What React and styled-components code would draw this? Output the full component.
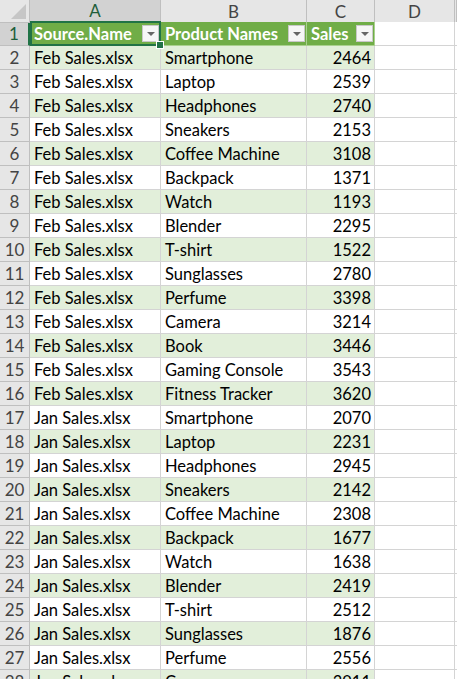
import React from "react";
import styled, { createGlobalStyle } from "styled-components";

const GlobalStyle = createGlobalStyle`
  html, body {
    margin: 0;
    padding: 0;
    background: #ffffff;
    overflow: hidden;
  }
  body {
    font-family: Lato, "Open Sans", sans-serif;
  }
`;

const COLS = "30px 131px 146px 68px 80px 2px";

const Sheet = styled.div`
  width: 457px;
  height: 679px;
  overflow: hidden;
  position: relative;
  font-family: Lato, "Noto Sans", sans-serif;
  font-size: 16.5px;
  color: #000;
`;

const HeaderRow = styled.div`
  display: grid;
  grid-template-columns: ${COLS};
  height: 22px;
`;

const Corner = styled.div`
  background: #e6e6e6;
  border-right: 1px solid #bfbfbf;
  border-bottom: 1px solid #bfbfbf;
  position: relative;
  &::after {
    content: "";
    position: absolute;
    right: 3px;
    bottom: 3px;
    border-left: 15px solid transparent;
    border-bottom: 15px solid #c6c6c6;
  }
`;

const ColHead = styled.div`
  display: flex;
  align-items: center;
  justify-content: center;
  background: ${(p) => (p.$active ? "#d2d2d2" : "#e6e6e6")};
  color: ${(p) => (p.$active ? "#1e5e3a" : "#444")};
  border-right: 1px solid #bfbfbf;
  border-bottom: ${(p) => (p.$active ? "2px solid #217346" : "1px solid #bfbfbf")};
  font-size: 17px;
  box-sizing: border-box;
`;

const Row = styled.div`
  display: grid;
  grid-template-columns: ${COLS};
  height: 24px;
`;

const RowNum = styled.div`
  display: flex;
  align-items: center;
  justify-content: center;
  background: ${(p) => (p.$active ? "#d2d2d2" : "#e6e6e6")};
  color: ${(p) => (p.$active ? "#1e5e3a" : "#444")};
  border-right: ${(p) => (p.$active ? "2px solid #217346" : "1px solid #bfbfbf")};
  border-bottom: 1px solid #bfbfbf;
  font-size: 17px;
  box-sizing: border-box;
`;

const Cell = styled.div`
  display: flex;
  align-items: center;
  justify-content: ${(p) => (p.$num ? "flex-end" : "space-between")};
  padding: ${(p) => (p.$head ? "0 1px 0 4px" : "0 3px 0 4px")};
  background: ${(p) => p.$bg || "#ffffff"};
  color: ${(p) => (p.$head ? "#ffffff" : "#000")};
  font-weight: ${(p) => (p.$head ? 700 : 400)};
  border-right: 1px solid ${(p) => p.$line || "#d4d4d4"};
  border-bottom: 1px solid ${(p) => p.$line || "#d4d4d4"};
  box-sizing: border-box;
  white-space: nowrap;
  overflow: hidden;
  position: relative;
`;

const Selection = styled.div`
  position: absolute;
  left: 30px;
  top: 21px;
  width: 131px;
  height: 25px;
  border: 2px solid #217346;
  box-sizing: border-box;
  pointer-events: none;
  &::after {
    content: "";
    position: absolute;
    right: -5px;
    bottom: -5px;
    width: 6px;
    height: 6px;
    background: #217346;
    border: 1px solid #fff;
  }
`;

const Dropdown = styled.span`
  width: 17px;
  height: 17px;
  flex: 0 0 17px;
  background: #f6f6f6;
  border: 1px solid #c8c8c8;
  box-sizing: border-box;
  display: flex;
  align-items: center;
  justify-content: center;
  &::before {
    content: "";
    border-left: 4px solid transparent;
    border-right: 4px solid transparent;
    border-top: 4px solid #666;
  }
`;

const data = [
  ["Feb Sales.xlsx", "Smartphone", 2464],
  ["Feb Sales.xlsx", "Laptop", 2539],
  ["Feb Sales.xlsx", "Headphones", 2740],
  ["Feb Sales.xlsx", "Sneakers", 2153],
  ["Feb Sales.xlsx", "Coffee Machine", 3108],
  ["Feb Sales.xlsx", "Backpack", 1371],
  ["Feb Sales.xlsx", "Watch", 1193],
  ["Feb Sales.xlsx", "Blender", 2295],
  ["Feb Sales.xlsx", "T-shirt", 1522],
  ["Feb Sales.xlsx", "Sunglasses", 2780],
  ["Feb Sales.xlsx", "Perfume", 3398],
  ["Feb Sales.xlsx", "Camera", 3214],
  ["Feb Sales.xlsx", "Book", 3446],
  ["Feb Sales.xlsx", "Gaming Console", 3543],
  ["Feb Sales.xlsx", "Fitness Tracker", 3620],
  ["Jan Sales.xlsx", "Smartphone", 2070],
  ["Jan Sales.xlsx", "Laptop", 2231],
  ["Jan Sales.xlsx", "Headphones", 2945],
  ["Jan Sales.xlsx", "Sneakers", 2142],
  ["Jan Sales.xlsx", "Coffee Machine", 2308],
  ["Jan Sales.xlsx", "Backpack", 1677],
  ["Jan Sales.xlsx", "Watch", 1638],
  ["Jan Sales.xlsx", "Blender", 2419],
  ["Jan Sales.xlsx", "T-shirt", 2512],
  ["Jan Sales.xlsx", "Sunglasses", 1876],
  ["Jan Sales.xlsx", "Perfume", 2556],
  ["Jan Sales.xlsx", "Camera", 3011],
];

const GREEN = "#70ad47";
const BAND = "#e2efda";

export default function App() {
  return (
    <Sheet>
      <GlobalStyle />
      <HeaderRow>
        <Corner />
        <ColHead $active>A</ColHead>
        <ColHead>B</ColHead>
        <ColHead>C</ColHead>
        <ColHead>D</ColHead>
        <ColHead />
      </HeaderRow>
      <Row>
        <RowNum $active>1</RowNum>
        <Cell $head $bg={GREEN} $line="#a9d08e">
          Source.Name <Dropdown />
        </Cell>
        <Cell $head $bg={GREEN} $line="#a9d08e">
          Product Names <Dropdown />
        </Cell>
        <Cell $head $bg={GREEN} $line="#a9d08e">
          Sales <Dropdown />
        </Cell>
        <Cell />
        <Cell />
      </Row>
      {data.map(([src, name, sales], i) => {
        const bg = i % 2 === 0 ? BAND : "#ffffff";
        return (
          <Row key={i}>
            <RowNum>{i + 2}</RowNum>
            <Cell $bg={bg}>{src}</Cell>
            <Cell $bg={bg}>{name}</Cell>
            <Cell $bg={bg} $num>
              {sales}
            </Cell>
            <Cell />
            <Cell />
          </Row>
        );
      })}
      <Selection />
    </Sheet>
  );
}
